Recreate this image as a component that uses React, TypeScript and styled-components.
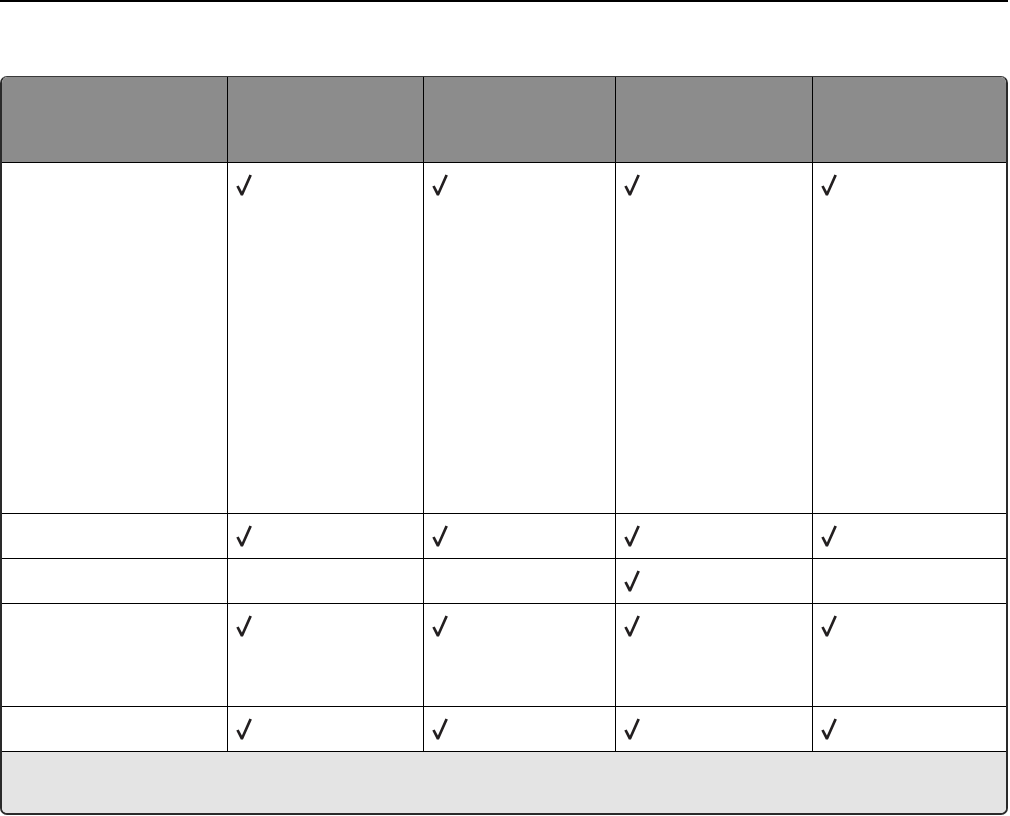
import styled, { createGlobalStyle } from "styled-components";

const GlobalStyle = createGlobalStyle`
  html, body {
    margin: 0;
    padding: 0;
    background: #ffffff;
    font-family: "Liberation Sans", Arial, sans-serif;
  }
`;

const Page = styled.div`
  width: 1010px;
  height: 816px;
  overflow: hidden;
`;

const TopRule = styled.div`
  width: 1008px;
  height: 2px;
  background: #000000;
`;

const Table = styled.div`
  margin-top: 74px;
  width: 1008px;
  box-sizing: border-box;
  border-top: 1px solid #3a3a3a;
  border-left: 2px solid #2a2a2a;
  border-right: 2px solid #2a2a2a;
  border-bottom: 2px solid #2a2a2a;
  border-radius: 7px;
  overflow: hidden;
`;

const Row = styled.div<{ $height: number; $head?: boolean }>`
  display: grid;
  grid-template-columns: 225px 196px 192px 197px 1fr;
  height: ${(p) => p.$height}px;
  border-bottom: 1px solid #000000;
  background: ${(p) => (p.$head ? "#8c8c8c" : "#ffffff")};
`;

const Cell = styled.div`
  padding: 11px 0 0 8px;

  & + & {
    border-left: 1px solid #000000;
  }
`;

const Footer = styled.div`
  height: 61px;
  background: #e4e4e4;
`;

const CheckMark = () => (
  <svg width="16" height="22" viewBox="0 0 16 22" aria-hidden="true">
    <polygon
      points="0.3,12.6 2.7,11.4 5.9,17.6 13.4,0.4 15.9,1.4 7,21.6 4.8,21.6"
      fill="#231f20"
    />
  </svg>
);

const rows: { height: number; checks: boolean[] }[] = [
  { height: 350, checks: [true, true, true, true] },
  { height: 44, checks: [true, true, true, true] },
  { height: 44, checks: [false, false, true, false] },
  { height: 102, checks: [true, true, true, true] },
  { height: 44, checks: [true, true, true, true] },
];

function App() {
  return (
    <Page>
      <GlobalStyle />
      <TopRule />
      <Table>
        <Row $height={85} $head>
          <Cell />
          <Cell />
          <Cell />
          <Cell />
          <Cell />
        </Row>
        {rows.map((row, i) => (
          <Row key={i} $height={row.height}>
            <Cell />
            {row.checks.map((on, j) => (
              <Cell key={j}>{on && <CheckMark />}</Cell>
            ))}
          </Row>
        ))}
        <Footer />
      </Table>
    </Page>
  );
}

export default App;
